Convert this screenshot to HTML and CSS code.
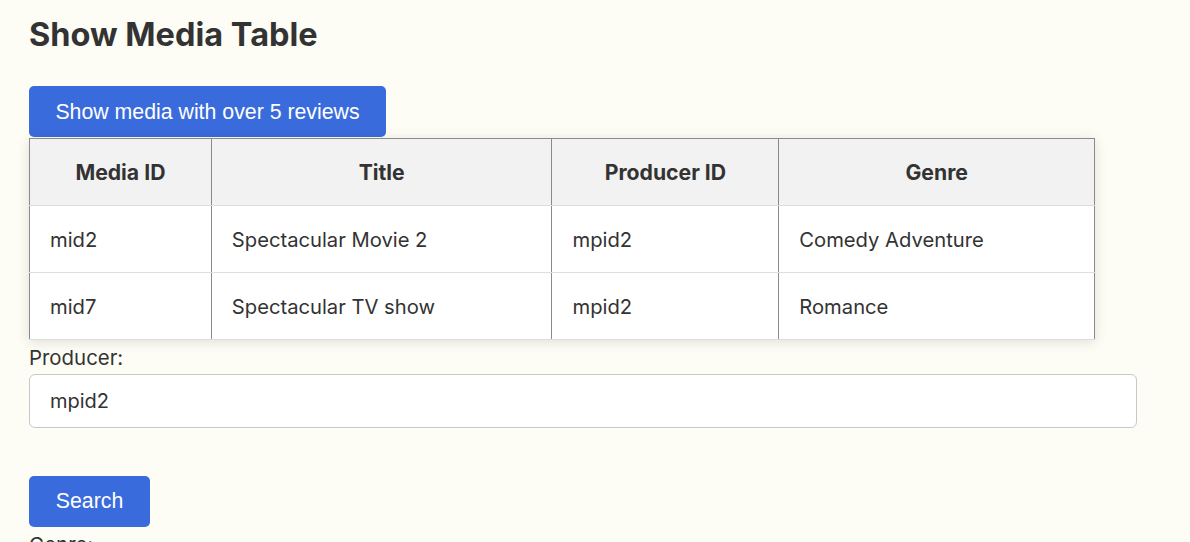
FILE: index.html
```html
<!DOCTYPE html>
<html>
<head>
<meta charset="utf-8">
<link rel="stylesheet" href="styles.css">
</head>
<body>
<main class="page">
  <h1 class="title">Show Media Table</h1>
  <button class="btn btn-wide">Show media with over 5 reviews</button>
  <table class="media">
    <colgroup>
      <col class="c1"><col class="c2"><col class="c3"><col class="c4">
    </colgroup>
    <thead>
      <tr><th>Media ID</th><th>Title</th><th>Producer ID</th><th>Genre</th></tr>
    </thead>
    <tbody>
      <tr><td>mid2</td><td>Spectacular Movie 2</td><td>mpid2</td><td>Comedy Adventure</td></tr>
      <tr><td>mid7</td><td>Spectacular TV show</td><td>mpid2</td><td>Romance</td></tr>
    </tbody>
  </table>
  <form class="search">
    <label class="label" for="producer">Producer:</label>
    <input class="field" id="producer" type="text" value="mpid2">
    <button class="btn btn-search" type="button">Search</button>
    <label class="label label-genre">Genre:</label>
  </form>
</main>
</body>
</html>
```
FILE: styles.css
```css
html, body {
  margin: 0;
  padding: 0;
  background: #fdfdf5;
}
body {
  font-family: Inter, "Noto Sans", sans-serif;
  color: #333;
}
.page {
  padding: 0 29px;
}
.title {
  margin: 0;
  padding-top: 17px;
  font-size: 32.5px;
  line-height: 36px;
  font-weight: 700;
  color: #333;
}
.btn {
  display: block;
  border: none;
  border-radius: 5px;
  background: #3a6bdc;
  color: #fff;
  font-family: "Liberation Sans", Arial, sans-serif;
  font-size: 21.3px;
  height: 51px;
  padding: 0 26px;
}
.btn-wide {
  margin-top: 33px;
  margin-bottom: 1px;
  width: 357px;
  padding-top: 2px;
}
.media {
  border-collapse: collapse;
  width: 1066px;
  background: #fff;
  border: 1px solid #8a8a8a;
  box-shadow: 0 2px 12px rgba(0, 0, 0, 0.12);
  font-size: 20.2px;
}
.c1 { width: 182px; }
.c2 { width: 341px; }
.c3 { width: 227px; }
.c4 { width: 316px; }
.media th, .media td {
  height: 66px;
  padding: 0 20px;
  border-left: 1px solid #8a8a8a;
  border-right: 1px solid #8a8a8a;
  border-bottom: 1px solid #ddd;
}
.media th {
  background: #f2f2f2;
  font-size: 21.2px;
  font-weight: 700;
  text-align: center;
}
.media td {
  text-align: left;
}
.search {
  display: flex;
  flex-direction: column;
  align-items: flex-start;
  padding-top: 6px;
}
.label {
  font-size: 20.4px;
  line-height: 24px;
}
.label-genre {
  margin-top: 6px;
}
.field {
  box-sizing: border-box;
  margin-top: 4px;
  width: 1108px;
  height: 54px;
  padding: 0 20px;
  border: 1px solid #c8c8c8;
  border-radius: 6px;
  background: #fff;
  font-family: Inter, "Noto Sans", sans-serif;
  font-size: 20px;
  color: #333;
}
.btn-search {
  margin-top: 48px;
  width: 121px;
  padding: 0;
}
```
